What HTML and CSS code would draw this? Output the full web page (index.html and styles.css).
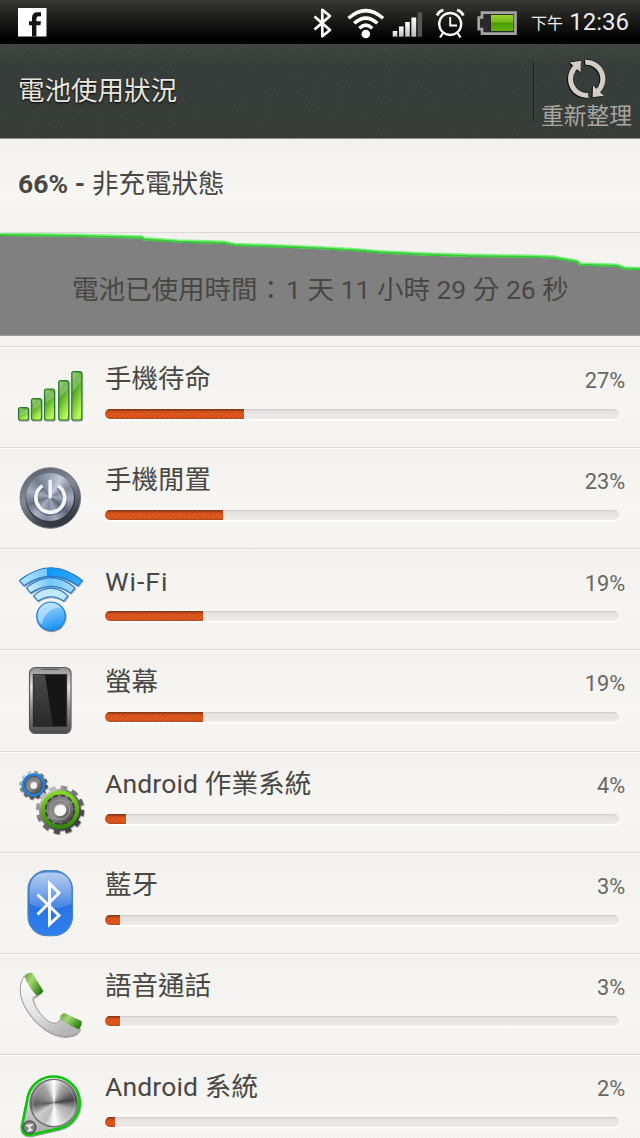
FILE: index.html
```html
<!DOCTYPE html>
<html lang="zh-Hant">
<head>
<meta charset="utf-8">
<title>電池使用狀況</title>
<link rel="stylesheet" href="styles.css">
</head>
<body>
<div class="screen">
  <div class="status">
    <svg class="status-fb" viewBox="17 8 30 29" width="30" height="29">
      <rect x="18" y="8" width="28.500" height="28.500" fill="#fff"/>
      <path d="M32 36.500V25.200h-3v-4h3v-3.200q0-5.800 5.500-5.800h3.500v4h-2.300q-2.300 0-2.300 2.300v2.700h4.600l-.6 4h-4v11.300z" fill="#141414"/>
    </svg>
    <svg class="status-icons" viewBox="310 4 210 38" width="210" height="38">
      <defs>
        <linearGradient id="sig" x1="0" y1="0" x2="0" y2="1"><stop offset="0" stop-color="#fff"/><stop offset="1" stop-color="#bbb"/></linearGradient>
        <linearGradient id="cell" x1="0" y1="0" x2="0" y2="1"><stop offset="0" stop-color="#9bd32c"/><stop offset=".45" stop-color="#73b71a"/><stop offset=".5" stop-color="#4b9a05"/><stop offset="1" stop-color="#62b310"/></linearGradient>
      </defs>
      <path d="M314.500 16.500l15.500 13.500-7.700 6.200v-26.400l7.700 6.200-15.500 13.500" fill="none" stroke="#fff" stroke-width="2.700" stroke-linejoin="round"/>
      <g fill="none" stroke="#fff" stroke-width="3.500">
        <path d="M348.500 18.300q17.300-15.500 34.600 0"/>
        <path d="M354.200 23.300q11.600-10.400 23.200 0"/>
        <path d="M359.300 28.300q6.500-6.200 13 0"/>
      </g>
      <circle cx="365.800" cy="34" r="4.300" fill="#fff"/>
      <g fill="url(#sig)">
        <rect x="392.700" y="31" width="4.600" height="5.700"/><rect x="399" y="26.500" width="4.600" height="10.200"/>
        <rect x="405.200" y="22" width="4.600" height="14.700"/><rect x="411.400" y="17.500" width="4.800" height="19.200"/>
      </g>
      <rect x="417.600" y="12.300" width="4.500" height="24.400" fill="#555"/>
      <g fill="none" stroke="#fff">
        <circle cx="450.200" cy="24" r="11" stroke-width="2.300"/>
        <path d="M450.200 17v8.500h6.800" stroke-width="1.900"/>
        <path d="M443 33l-3 4.500M457.500 33l3 4.500" stroke-width="2.200"/>
        <path d="M437.200 15.500q1.500-4.200 6.200-5.300M463.200 15.500q-1.500-4.200-6.200-5.300" stroke-width="2.900"/>
      </g>
      <path d="M482 12.700h33.500v21H482v-4.500h-3.300V17.500H482z" fill="#282828" stroke="#a4a4a4" stroke-width="2.700"/>
      <rect x="491" y="15" width="22.500" height="16" fill="url(#cell)"/>
    </svg>
    <span class="ampm">下午</span>
    <span class="clock">12:36</span>
  </div>

  <div class="header">
    <div class="title">電池使用狀況</div>
    <div class="split"></div>
    <div class="refresh">
      <svg viewBox="564 57 46 44" width="46" height="44">
        <g class="refresh-glyph">
          <path d="M588.200 95.500A16.700 16.700 0 0 1 576.500 66M585.200 62.300A16.700 16.700 0 0 1 597 91.700" fill="none" stroke="#d3cdc6" stroke-width="4.900"/>
          <path d="M569.800 62.400L581 60.800 580.400 72.300zM603.800 95.700L592.600 97.200 593 85.600z" fill="#d3cdc6"/>
        </g>
      </svg>
      <span>重新整理</span>
    </div>
  </div>

  <div class="level"><b>66% - </b>非充電狀態</div>

  <div class="chart">
    <svg viewBox="0 233 640 103" width="640" height="103">
      <path d="M0 335.500V234.600L70 235.600 142 237.300 144 239 178 241.200 225 242.600 235 244.700 280 246.200 320 247.900 360 250.200 380 252 420 254 470 255.600 530 256.400 553 257.200 577 261.500 580 264.200 617 265.500 625 268.300 640 268.700V335.500z" fill="#808080"/>
      <path d="M0 335.300H640" stroke="#94958f" stroke-width="1"/>
      <g fill="none" stroke-linejoin="round">
        <path d="M-2 234.200L70 235.100 142 237 144 238.700 178 240.900 225 242.300 235 244.400 280 245.900 320 247.600 360 249.900 380 251.700 420 253.700 470 255.300 530 256.100 553 256.900 577 261.200 580 263.900 617 265.200 625 268 642 268.400" stroke="#7df07d" stroke-width="3.400"/>
        <path transform="translate(0 .8)" d="M-2 234.200L70 235.100 142 237 144 238.700 178 240.900 225 242.300 235 244.400 280 245.900 320 247.600 360 249.900 380 251.700 420 253.700 470 255.300 530 256.100 553 256.900 577 261.200 580 263.900 617 265.200 625 268 642 268.400" stroke="#37c83a" stroke-width="1.900"/>
      </g>
    </svg>
    <div class="elapsed">電池已使用時間：<span class="figures">1 天 11 小時 29 分 26 秒</span></div>
  </div>

  <div class="list">
    <div class="row">
      <svg class="icon" viewBox="14 361 74 75">
        <defs>
          <linearGradient id="grn" x1="0" y1="0" x2=".5" y2="1"><stop offset="0" stop-color="#7cc54b"/><stop offset=".35" stop-color="#459c20"/><stop offset="1" stop-color="#b7fa55"/></linearGradient>
          <filter id="sh" x="-20%" y="-20%" width="140%" height="150%"><feDropShadow dx=".5" dy="1" stdDeviation=".7" flood-opacity=".4"/></filter>
        </defs>
        <g fill="url(#grn)" stroke="#2f7a30" stroke-width="1.200" filter="url(#sh)">
          <rect x="18.500" y="407.500" width="10" height="12.500" rx="2"/><rect x="31.500" y="398.500" width="10" height="21.500" rx="2"/>
          <rect x="44.500" y="389" width="10" height="31" rx="2"/><rect x="58.700" y="380.700" width="10" height="39.300" rx="2"/>
          <rect x="71.800" y="371.700" width="10" height="48.300" rx="2"/>
        </g>
        <g fill="#fff" opacity=".28"><path d="M19.500 409h8v3l-8 4zM32.500 400h8v4l-8 6zM45.500 390.500h8v6l-8 7zM59.700 382h8v7l-8 9zM72.800 373h8v8l-8 11z"/></g>
      </svg>
      <div class="name">手機待命</div><div class="pct">27%</div>
      <div class="bar"><div class="fill" style="width:27%"></div></div>
    </div>
    <div class="row">
      <svg class="icon" viewBox="14 462 74 75">
        <defs>
          <linearGradient id="ring" x1="0" y1="0" x2=".4" y2="1"><stop offset="0" stop-color="#525862"/><stop offset=".5" stop-color="#848a98"/><stop offset="1" stop-color="#34383f"/></linearGradient>
        </defs>
        <circle cx="50.300" cy="498" r="30.300" fill="url(#ring)" stroke="#777c86" stroke-width="1"/>
        <circle cx="50.300" cy="498.500" r="24.700" fill="#353a43"/>
        <foreignObject x="26.300" y="473" width="48" height="48"><div class="brushed blue"></div></foreignObject>
        <g fill="none" stroke="#3a3f4b" opacity=".4" transform="translate(0 1)"><path d="M42.500 485.800a14.400 14.400 0 1 0 15.600 0" stroke-width="5"/></g>
        <path d="M42.500 485.800a14.400 14.400 0 1 0 15.600 0" fill="none" stroke="#f4f5f8" stroke-width="3.700"/>
        <rect x="48.400" y="479.500" width="3.500" height="19" rx="1.600" fill="#f4f5f8"/>
      </svg>
      <div class="name">手機閒置</div><div class="pct">23%</div>
      <div class="bar"><div class="fill" style="width:23%"></div></div>
    </div>
    <div class="row">
      <svg class="icon" viewBox="14 563 74 75">
        <defs>
          <linearGradient id="wf" x1="0" y1="0" x2="1" y2="0"><stop offset="0" stop-color="#b4e2ff"/><stop offset=".43" stop-color="#77c8ff"/><stop offset=".44" stop-color="#0b98fb"/><stop offset="1" stop-color="#37a9fa"/></linearGradient>
          <linearGradient id="wf2" x1="0" y1="0" x2="1" y2="0"><stop offset="0" stop-color="#d5efff"/><stop offset=".5" stop-color="#70c6ff"/><stop offset="1" stop-color="#a8dcff"/></linearGradient>
          <linearGradient id="ball" x1=".3" y1="0" x2=".6" y2="1"><stop offset="0" stop-color="#a9dcff"/><stop offset="1" stop-color="#1590f5"/></linearGradient>
        </defs>
        <g stroke="#2379cb" stroke-width="1.100" stroke-linejoin="round" filter="url(#sh)">
          <path d="M19.500 580.500Q51 555 82.300 580.500L78 585.700Q51 567 24 585.700z" fill="url(#wf)"/>
          <path d="M26.500 587.800Q51 567.500 75 587.800L70.800 593Q51 579.500 30.700 593z" fill="url(#wf2)"/>
          <path d="M33.500 595.800Q51 580.500 68 595.800L63.800 601Q51 592.500 38 601z" fill="#c1e8ff"/>
          <circle cx="51" cy="616.300" r="14.300" fill="url(#ball)"/>
        </g>
        <path d="M38 617c0-17 18-16.500 23-9.500-10 0-17 6-19 17-3-2-4-4-4-7.500z" fill="#d4efff" opacity=".55"/>
      </svg>
      <div class="name latin wide">Wi-Fi</div><div class="pct latin">19%</div>
      <div class="bar"><div class="fill" style="width:19%"></div></div>
    </div>
    <div class="row">
      <svg class="icon" viewBox="14 664 74 75">
        <defs>
          <linearGradient id="ph" x1="0" y1="0" x2="0" y2="1"><stop offset="0" stop-color="#8d8d8d"/><stop offset=".12" stop-color="#b5b5b5"/><stop offset=".3" stop-color="#e6e6e6"/><stop offset=".6" stop-color="#929292"/><stop offset="1" stop-color="#4c4c4c"/></linearGradient>
          <linearGradient id="gl" x1="0" y1="0" x2="0" y2="1"><stop offset="0" stop-color="#4a4a4a"/><stop offset="1" stop-color="#292929"/></linearGradient>
        </defs>
        <rect x="29.500" y="667.500" width="41.500" height="66" rx="6" fill="url(#ph)" stroke="#5c5c5c" stroke-width="1.200"/>
        <path d="M41 669.300H59" stroke="#5e5e5e" stroke-width="1.300"/>
        <rect x="33.200" y="674.300" width="33.600" height="52.400" fill="#161616" stroke="#353535" stroke-width=".8"/>
        <path d="M34 675H45L53 726H34z" fill="url(#gl)"/>
      </svg>
      <div class="name">螢幕</div><div class="pct">19%</div>
      <div class="bar"><div class="fill" style="width:19%"></div></div>
    </div>
    <div class="row">
      <svg class="icon" viewBox="14 766 74 75">
        <defs>
          <linearGradient id="gear" x1="0" y1="0" x2=".8" y2="1"><stop offset="0" stop-color="#f4f4f4"/><stop offset=".3" stop-color="#8c8c8c"/><stop offset="1" stop-color="#383838"/></linearGradient>
          <linearGradient id="hub" x1="0" y1="0" x2="1" y2="1"><stop offset="0" stop-color="#777"/><stop offset=".5" stop-color="#8c8c8c"/><stop offset="1" stop-color="#484848"/></linearGradient>
          <linearGradient id="gg" x1="0" y1="0" x2="0" y2="1"><stop offset="0" stop-color="#84da20"/><stop offset="1" stop-color="#318b08"/></linearGradient>
        </defs>
        <g fill="none" filter="url(#sh)">
          <circle cx="33.600" cy="785" r="12.700" stroke="url(#gear)" stroke-width="3" stroke-dasharray="3.500 3.149"/>
          <circle cx="33.600" cy="785" r="8.200" stroke="url(#gear)" stroke-width="8.600"/>
          <circle cx="33.600" cy="785" r="7" stroke="url(#hub)" stroke-width="6"/>
          <circle cx="33.600" cy="785" r="10.300" stroke="#2680d8" stroke-width="2.800"/>
          <circle cx="33.600" cy="785" r="8.400" stroke="#474c52" stroke-width="1"/>
        </g>
        <g fill="none" filter="url(#sh)">
          <circle cx="60" cy="809.700" r="22" stroke="url(#gear)" stroke-width="4.400" stroke-dasharray="6 5.519"/>
          <circle cx="60" cy="809.700" r="18.500" stroke="url(#gear)" stroke-width="5"/>
          <circle cx="60" cy="809.700" r="11" stroke="url(#hub)" stroke-width="9.400"/>
          <circle cx="60" cy="809.700" r="17.100" stroke="url(#gg)" stroke-width="4"/>
          <circle cx="60" cy="809.700" r="14.300" stroke="#3c3e3a" stroke-width="1.700" stroke-dasharray="5 2.490"/>
          <circle cx="60" cy="809.700" r="9.700" stroke="#a2a2a2" stroke-width="1"/>
        </g>
      </svg>
      <div class="name android">Android 作業系統</div><div class="pct">4%</div>
      <div class="bar"><div class="fill" style="width:4%"></div></div>
    </div>
    <div class="row">
      <svg class="icon" viewBox="14 867 74 75">
        <defs>
          <linearGradient id="bt" x1="0" y1="0" x2="0" y2="1"><stop offset="0" stop-color="#4d84dc"/><stop offset=".5" stop-color="#2a72e0"/><stop offset="1" stop-color="#2f7ff0"/></linearGradient>
          <linearGradient id="btg" x1="0" y1="0" x2="0" y2="1"><stop offset="0" stop-color="#fff" stop-opacity=".6"/><stop offset="1" stop-color="#fff" stop-opacity=".13"/></linearGradient>
        </defs>
        <rect x="28" y="870.600" width="44.500" height="65" rx="19" fill="url(#bt)" stroke="#4789bd" stroke-width="1.200"/>
        <path d="M29.500 904V890q1-17.500 18-17.500h6q17 0 18 17.500v14q-21 9-42 0z" fill="url(#btg)"/>
        <path d="M37.500 894.500L59 915.500 49.500 924.500V883.500L59 893 37.500 914.500" fill="none" stroke="#fff" stroke-width="2.900" stroke-linejoin="miter"/>
      </svg>
      <div class="name">藍牙</div><div class="pct">3%</div>
      <div class="bar"><div class="fill" style="width:3%"></div></div>
    </div>
    <div class="row">
      <svg class="icon" viewBox="14 968 74 75">
        <defs>
          <linearGradient id="hs" x1="0" y1="0" x2=".6" y2="1"><stop offset="0" stop-color="#fff"/><stop offset=".6" stop-color="#e2e2e2"/><stop offset="1" stop-color="#b5b5b5"/></linearGradient>
          <linearGradient id="cap" x1="0" y1="0" x2="1" y2=".7"><stop offset="0" stop-color="#5d9e35"/><stop offset=".4" stop-color="#a4d876"/><stop offset="1" stop-color="#287a0a"/></linearGradient>
        </defs>
        <path d="M24.500 976C18 984 19 998 27 1010 37 1026 52 1036.300 65 1036.300 74 1036.300 79.500 1033 80 1028L60 1019.500C58 1024 53 1024 48 1021 40 1015 34.500 1006 33 1000 32.500 997.500 34 996.500 37.500 995.500z" fill="url(#hs)" stroke="#9d9d9d" stroke-width="1" filter="url(#sh)"/>
        <path d="M24.300 976.300Q26.500 972.300 32 972.700L43.300 990.700Q41.500 995 36.800 995.800 29 988 24.300 976.300z" fill="url(#cap)"/>
        <path d="M60 1018.500Q60.500 1013.700 64.500 1013L81.500 1021Q82.500 1026 78.800 1029.300 68 1025 60 1018.500z" fill="url(#cap)"/>
      </svg>
      <div class="name">語音通話</div><div class="pct">3%</div>
      <div class="bar"><div class="fill" style="width:3%"></div></div>
    </div>
    <div class="row">
      <svg class="icon" viewBox="14 1069 74 75">
        <defs><linearGradient id="pl" x1="0" y1="0" x2="0" y2="1"><stop offset="0" stop-color="#eee"/><stop offset="1" stop-color="#aaa"/></linearGradient></defs>
        <path d="M28 1096A26.300 26.300 0 1 1 59 1128.500L30.500 1134.800Q21.500 1135.500 22 1126z" fill="url(#pl)" stroke="#10c410" stroke-width="2.700" filter="url(#sh)"/>
        <circle cx="53.800" cy="1103" r="24.300" fill="#6c6c6c"/>
        <foreignObject x="31" y="1080.300" width="45.500" height="45.500"><div class="brushed"></div></foreignObject>
        <circle cx="53.800" cy="1103" r="21" fill="none" stroke="#fff" stroke-opacity=".25"/>
        <circle cx="29.500" cy="1127.300" r="6.200" fill="#858585" stroke="#555" stroke-width="1.500"/>
        <path d="M25 1125l9-1.500-4 4 3 3-6 1.500 2-4z" fill="#e8e8e8"/>
      </svg>
      <div class="name android">Android 系統</div><div class="pct">2%</div>
      <div class="bar"><div class="fill" style="width:2%"></div></div>
    </div>
  </div>
</div>
</body>
</html>
```
FILE: styles.css
```css
* { box-sizing: border-box; }
html, body { margin: 0; padding: 0; overflow: hidden; }
body {
  font-family: Roboto, "Noto Sans CJK TC", sans-serif;
  color: #484744;
}
svg { display: block; flex: none; }
.screen {
  width: 640px;
  height: 1138px;
  overflow: hidden;
  background: #f6f5f1;
}
.status {
  height: 44px;
  display: flex;
  align-items: center;
  padding-left: 17px;
  padding-right: 11px;
  color: #ececec;
  background: linear-gradient(#383836, #1b1b1a 45%, #000 90%);
  white-space: nowrap;
}
.status-icons { margin-left: 263px; margin-top: 2px; }
.status-fb { margin-top: 1px; }
.ampm { font-size: 16px; line-height: 20px; margin-left: 11px; padding-top: 4px; }
.clock { font-size: 24px; line-height: 30px; margin-left: auto; }

.header {
  height: 95px;
  display: flex;
  padding-left: 18px;
  border-bottom: 1px solid #8b8f8a;
  background:
    repeating-linear-gradient(35deg, rgba(0,0,0,.03) 0 1px, transparent 1px 3px),
    repeating-linear-gradient(-50deg, rgba(255,255,255,.012) 0 2px, transparent 2px 5px),
    linear-gradient(#3e463f, #373d3a 24%, #383d3a);
}
.title {
  flex: 1;
  font-size: 26.500px;
  line-height: 40px;
  padding-top: 27px;
  color: #e9e5de;
  text-shadow: 0 1px 2px #000;
}
.split { width: 1px; height: 59px; margin-top: 18px; background: #1b1e1c; }
.refresh {
  width: 106px;
  display: flex;
  flex-direction: column;
  align-items: center;
  padding-top: 13px;
  font-size: 22.800px;
  line-height: 32px;
  color: #a9a6a0;
}
.refresh span { margin-left: -1px; }
.refresh-glyph { filter: drop-shadow(-.5px 1px .7px #111) drop-shadow(.5px -.7px .5px #1c201e); }
.level, .chart, .row {
  background:
    repeating-linear-gradient(135deg, rgba(90,80,60,.022) 0 1.400px, transparent 1.400px 2.828px),
    linear-gradient(#f4f3f0, #f9f8f5 60%, #f5f4f1);
}
.level {
  height: 94px;
  padding: 25px 18px 0;
  font-size: 26.500px;
  line-height: 40px;
  border-bottom: 1px solid #dbdad6;
}
.level b { font-weight: 700; white-space: pre; letter-spacing: .05px; }
.chart { height: 112.800px; display: grid; grid-template: 112.800px / 640px; }
.chart > * { grid-area: 1 / 1; }
.elapsed {
  padding: 37px 0 0 72px;
  z-index: 1;
  font-size: 26.500px;
  line-height: 40px;
  white-space: nowrap;
}
.figures { padding-left: 2px; }
.row {
  height: 101.200px;
  border-top: 1px solid #dad9d5;
  box-shadow: inset 0 1px 0 #fbfaf8;
  display: grid;
  grid-template-columns: 74px 1fr auto;
  grid-template-rows: 62px 10px;
  column-gap: 0;
  padding: 0 15px 0 14px;
}
.icon { width: 74px; height: 75px; grid-row: 1 / 3; margin-top: 14px; overflow: visible; }
.name { font-size: 26.500px; line-height: 40px; padding: 12px 0 0 17px; }
.name.latin { padding-top: 13px; }
.name.wide { letter-spacing: 1px; }
.name.android { letter-spacing: .15px; }
.pct { font-size: 21.800px; line-height: 30px; padding-top: 19px; color: #686764; letter-spacing: -.1px; }
.pct.latin { padding-top: 20px; }
.bar {
  grid-column: 2 / 4;
  height: 10px;
  margin: 0 6px 0 17px;
  border-radius: 5px;
  overflow: hidden;
  background: linear-gradient(#cbcac6, #e4e3df 20%, #edece8);
  box-shadow: 0 1.500px 0 #fff;
}
.fill {
  height: 10px;
  background:
    linear-gradient(rgba(60,35,25,.65), rgba(100,30,0,.15) 25%, transparent 40% 82%, rgba(110,60,40,.45)),
    repeating-linear-gradient(135deg, #d2501a 0 1.400px, #df581e 1.400px 3.500px);
}
.brushed {
  width: 100%;
  height: 100%;
  border-radius: 50%;
  background: conic-gradient(#fff, #aaa 25deg, #858585 50deg, #444 80deg, #aaa 110deg, #c5c5c5 145deg, #fff 180deg, #bbb 205deg, #ccc 235deg, #606060 265deg, #8a8a8a 295deg, #a5a5a5 330deg, #fff);
}
.brushed.blue {
  background: conic-gradient(#9ca4b8, #c3cadb 30deg, #808799 65deg, #a2a9bd 95deg, #5d6474 130deg, #9fa6ba 165deg, #848b9e 190deg, #a9b0c3 220deg, #697083 250deg, #a6adbf 285deg, #737b8d 320deg, #9ca4b8);
}
```
